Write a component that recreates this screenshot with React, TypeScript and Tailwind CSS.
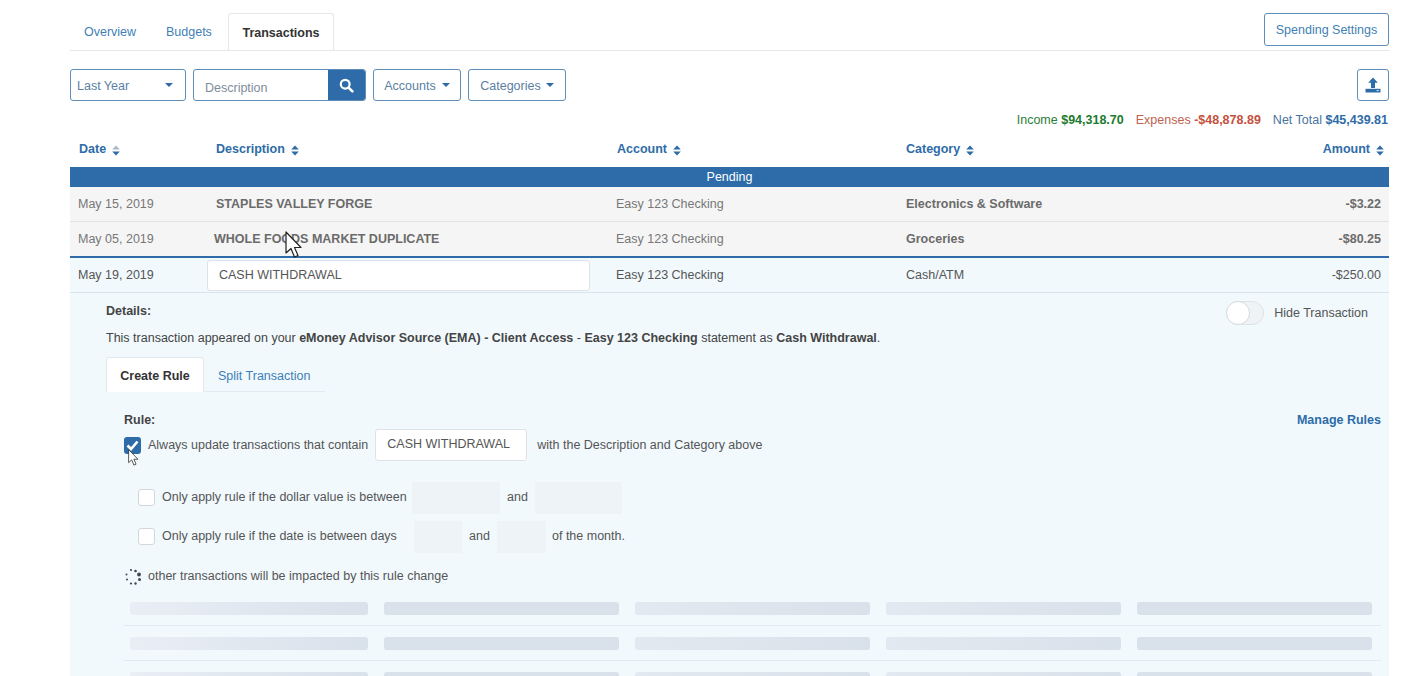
import React from "react";

function Caret() {
  return <span className="inline-block w-0 h-0 border-x-[4px] border-x-transparent border-t-[4px] border-t-[#2d6ca8]" />;
}

function Sort({ dim }: { dim?: boolean }) {
  return (
    <svg width="8" height="11" viewBox="0 0 8 11" className="ml-[6px] mt-[2px]">
      <path d="M4 0.5 L7.8 4.5 H0.2 Z" fill={dim ? "#a9b8c6" : "#2d6ca8"} />
      <path d="M4 10.5 L7.8 6.5 H0.2 Z" fill="#2d6ca8" />
    </svg>
  );
}

function Head({ label, dim }: { label: string; dim?: boolean }) {
  return (
    <span className="flex items-center font-bold text-[#2d6ca8]">
      {label}
      <Sort dim={dim} />
    </span>
  );
}

function Cursor({ className, scale = 1 }: { className: string; scale?: number }) {
  return (
    <svg width={18 * scale} height={28 * scale} viewBox="0 0 18 28" className={className}>
      <path d="M1 1 V22 L6 17.5 L9.5 26 L13 24.5 L9.5 16.5 H16 Z" fill="#fff" stroke="#222" strokeWidth="1.2" strokeLinejoin="round" />
    </svg>
  );
}

function Row({ date, desc, acct, cat, amt, last }: { date: string; desc: string; acct: string; cat: string; amt: string; last?: boolean }) {
  return (
    <div className={`flex items-center bg-[#f5f5f5] text-[#6b6b6b] ${last ? "h-[34px]" : "h-[35px] border-b border-[#e2e2e2]"}`}>
      <div className="w-[137px] pl-2 pt-px text-[#777]">{date}</div>
      <div className={`w-[401px] font-bold ${last ? "pl-[7px]" : "pl-[9px]"}`}>{desc}</div>
      <div className="w-[290px] pl-2 pt-px text-[#777]">{acct}</div>
      <div className="w-[300px] pl-2 font-bold">{cat}</div>
      <div className="flex-1 pr-2 text-right font-bold">{amt}</div>
    </div>
  );
}

function SkeletonRow({ border }: { border?: boolean }) {
  return (
    <div className={`flex gap-[16px] pl-[6px] pr-2 pb-[10px] mb-[11px] ${border ? "border-b border-[#e2ebf4]" : ""}`}>
      {[0, 1, 2, 3, 4].map((i) => (
        <div
          key={i}
          className={`h-[13px] rounded-[3px] ${i === 0 ? "w-[238px] bg-gradient-to-r from-[#e9eef6] to-[#d9e1ea]" : i === 2 || i === 3 ? "w-[235px] bg-gradient-to-r from-[#e3e9f1] to-[#d9e1ea]" : "w-[235px] bg-[#d9e1ea]"}`}
        />
      ))}
    </div>
  );
}

function Box({ className }: { className?: string }) {
  return <span className={`block w-[17px] h-[17px] rounded-[3px] border border-[#d3d7db] bg-white shrink-0 ${className ?? ""}`} />;
}

function Spinner() {
  const dots = [
    [7, 2, 1.1],
    [11.5, 3, 1.3],
    [15, 6.5, 1.9],
    [15.5, 11.5, 1.5],
    [11.5, 15.5, 1.2],
    [7, 15.5, 1.1],
    [3, 11.5, 1],
    [2.5, 6.5, 1],
  ];
  return (
    <svg width="18" height="18" viewBox="0 0 18 18" className="shrink-0">
      {dots.map(([x, y, r], i) => (
        <circle key={i} cx={x} cy={y} r={r} fill="#3f4853" />
      ))}
    </svg>
  );
}

export default function App() {
  return (
    <div className="relative h-[676px] w-[1425px] overflow-hidden bg-white pl-[70px] pr-[36px] pt-[13px] font-['Liberation_Sans',Arial,sans-serif] text-[12.5px] text-[#555]">
      {/* Tabs */}
      <div className="flex items-end justify-between h-[38px] border-b border-[#e6e6e6]">
        <div className="flex h-[37px]">
          <span className="w-[79px] pl-[14px] pt-[10px] text-[#3f7fb5]">Overview</span>
          <span className="w-[79px] pl-[17px] pt-[10px] text-[#3f7fb5]">Budgets</span>
          <span className="w-[106px] text-center pt-[10px] font-bold text-[#333] bg-white border border-b-0 border-[#e6e6e6] rounded-t-[3px]">Transactions</span>
        </div>
        <button className="h-[33px] w-[125px] mb-[4px] pt-px border border-[#5d8db8] rounded-[3px] text-[#3f7fb5] bg-white">Spending Settings</button>
      </div>

      {/* Filters */}
      <div className="flex items-center mt-[18px] h-[32px]">
        <div className="flex items-center justify-between w-[116px] h-[32px] pl-[6px] pr-[12px] border border-[#5d8db8] rounded-[3px] text-[#5a7fa3]">
          <span className="pt-[2px]">Last Year</span> <Caret />
        </div>
        <div className="flex ml-[7px] w-[173px] h-[32px] border border-[#5d8db8] rounded-[3px] overflow-hidden">
          <span className="flex-1 pl-[11px] pt-[9px] text-[#7d8d9c]">Description</span>
          <span className="w-[37px] bg-[#2d6ca8] flex items-center justify-center">
            <svg width="15" height="15" viewBox="0 0 15 15">
              <circle cx="6.2" cy="6.2" r="4.4" fill="none" stroke="#fff" strokeWidth="2.2" />
              <path d="M9.6 9.6 L13.4 13.4" stroke="#fff" strokeWidth="2.6" strokeLinecap="round" />
            </svg>
          </span>
        </div>
        <div className="flex items-center justify-center gap-[6px] ml-[7px] w-[88px] h-[32px] border border-[#5d8db8] rounded-[3px] text-[#5a7fa3]">
          <span className="pt-[2px]">Accounts</span> <Caret />
        </div>
        <div className="flex items-center justify-center gap-[5px] ml-[7px] w-[98px] h-[32px] border border-[#5d8db8] rounded-[3px] text-[#5a7fa3]">
          <span className="pt-[2px]">Categories</span> <Caret />
        </div>
        <div className="flex items-center justify-center ml-auto w-[32px] h-[32px] border border-[#5d8db8] rounded-[3px]">
          <svg width="16" height="16" viewBox="0 0 16 16">
            <path d="M8 0.5 L12.8 5.8 H10 V11 H6 V5.8 H3.2 Z" fill="#2d6ca8" />
            <path d="M0.5 11.8 H15.5 V15.5 H0.5 Z" fill="#2d6ca8" />
            <path d="M11.5 13.6 H14" stroke="#cfe0ef" strokeWidth="1" />
          </svg>
        </div>
      </div>

      {/* Totals */}
      <div className="flex justify-end gap-[12px] mt-[12px] pr-px h-[14px] leading-[14px]">
        <span className="text-[#2e7d3a]">Income <b className="text-[#1c7a2c]">$94,318.70</b></span>
        <span className="text-[#c0624e]">Expenses <b className="text-[#c4503d]">-$48,878.89</b></span>
        <span className="text-[#48749e]">Net Total <b className="text-[#2d6ca8]">$45,439.81</b></span>
      </div>

      {/* Table header */}
      <div className="flex items-center h-[27px] mt-[9px]">
        <div className="w-[137px] pl-[9px]"><Head label="Date" dim /></div>
        <div className="w-[401px] pl-[9px]"><Head label="Description" /></div>
        <div className="w-[290px] pl-[9px]"><Head label="Account" /></div>
        <div className="w-[300px] pl-[8px]"><Head label="Category" /></div>
        <div className="flex-1 flex justify-end pr-[5px]"><Head label="Amount" /></div>
      </div>
      <div className="h-[20px] mt-[4px] bg-[#2d6ca8] text-white text-center leading-[20px]">Pending</div>

      <Row date="May 15, 2019" desc="STAPLES VALLEY FORGE" acct="Easy 123 Checking" cat="Electronics & Software" amt="-$3.22" />
      <Row date="May 05, 2019" desc="WHOLE FOODS MARKET DUPLICATE" acct="Easy 123 Checking" cat="Groceries" amt="-$80.25" last />

      {/* Open transaction */}
      <div className="flex items-center h-[37px] pt-px border-t-2 border-[#2d6ca8] border-b border-b-[#d9e4ee] bg-[#f1f9fd] text-[#555]">
        <div className="w-[137px] pl-2">May 19, 2019</div>
        <div className="w-[401px]">
          <div className="w-[383px] h-[31px] pl-[11px] flex items-center bg-white border border-[#dfe3e7] rounded-[3px]">CASH WITHDRAWAL</div>
        </div>
        <div className="w-[290px] pl-2">Easy 123 Checking</div>
        <div className="w-[300px] pl-2">Cash/ATM</div>
        <div className="flex-1 pr-2 text-right">-$250.00</div>
      </div>

      {/* Details */}
      <div className="bg-[#f1f9fd] pl-[36px] pt-[9px] h-[400px]">
        <div className="flex items-start justify-between pr-[21px] h-[24px]">
          <span className="font-bold text-[#444]">Details:</span>
          <div className="flex items-center gap-[10px] -mt-px">
            <span className="relative block w-[38px] h-[24px] rounded-full bg-[#f0f3f6] border border-[#dfe3e7]">
              <span className="absolute -left-px -top-px w-[24px] h-[24px] rounded-full bg-white border border-[#d5dade]" />
            </span>
            <span>Hide Transaction</span>
          </div>
        </div>
        <div className="mt-[3px] text-[#444]">
          This transaction appeared on your <b>eMoney Advisor Source (EMA) - Client Access</b> - <b>Easy 123 Checking</b> statement as <b>Cash Withdrawal</b>.
        </div>

        <div className="flex h-[35px] mt-[9px] border-b border-[#e4ecf3] w-[219px]">
          <span className="w-[98px] h-[35px] text-center pt-[9px] font-bold text-[#333] bg-white border border-b-0 border-[#e4e8ec] rounded-t-[3px]">Create Rule</span>
          <span className="pl-[14px] pt-[10px] text-[#3f7fb5]">Split Transaction</span>
        </div>

        <div className="pl-[18px] pr-2 pt-[21px]">
          <div className="flex justify-between h-[14px] leading-[14px]">
            <span className="font-bold text-[#444]">Rule:</span>
            <span className="font-bold text-[#2d6ca8]">Manage Rules</span>
          </div>
          <div className="flex items-center h-[32px] mt-[3px]">
            <span className="relative flex items-center justify-center w-[17px] h-[17px] rounded-[3px] bg-[#2d6ca8] mr-[7px]">
              <svg width="13" height="11" viewBox="0 0 13 11">
                <path d="M1.5 5.5 L5 9 L11.5 1.5" fill="none" stroke="#fff" strokeWidth="2.6" />
              </svg>
            </span>
            <span>Always update transactions that contain</span>
            <span className="flex items-center w-[152px] h-[32px] -mt-[2px] ml-[7px] pl-[11px] bg-white border border-[#dfe3e7] rounded-[3px]">CASH WITHDRAWAL</span>
            <span className="ml-[10px]">with the Description and Category above</span>
          </div>
          <div className="flex items-center h-[32px] mt-[20px] ml-[14px]">
            <Box className="mr-[7px]" />
            <span className="w-[250px]">Only apply rule if the dollar value is between</span>
            <span className="w-[88px] h-[32px] bg-[#eef3f7]" />
            <span className="w-[35px] text-center">and</span>
            <span className="w-[87px] h-[32px] bg-[#eef3f7]" />
          </div>
          <div className="flex items-center h-[32px] mt-[7px] ml-[14px]">
            <Box className="mr-[7px]" />
            <span className="w-[252px]">Only apply rule if the date is between days</span>
            <span className="w-[48px] h-[32px] bg-[#eef3f7]" />
            <span className="w-[35px] text-center">and</span>
            <span className="w-[49px] h-[32px] bg-[#eef3f7]" />
            <span className="ml-[6px]">of the month.</span>
          </div>
          <div className="flex items-center gap-[6px] h-[18px] mt-[15px]">
            <Spinner />
            <span>other transactions will be impacted by this rule change</span>
          </div>
          <div className="mt-[16px]">
            <SkeletonRow border />
            <SkeletonRow border />
            <SkeletonRow />
          </div>
        </div>
      </div>

      <Cursor className="absolute left-[285px] top-[231px]" />
      <Cursor className="absolute left-[128px] top-[449px]" scale={0.62} />
    </div>
  );
}
